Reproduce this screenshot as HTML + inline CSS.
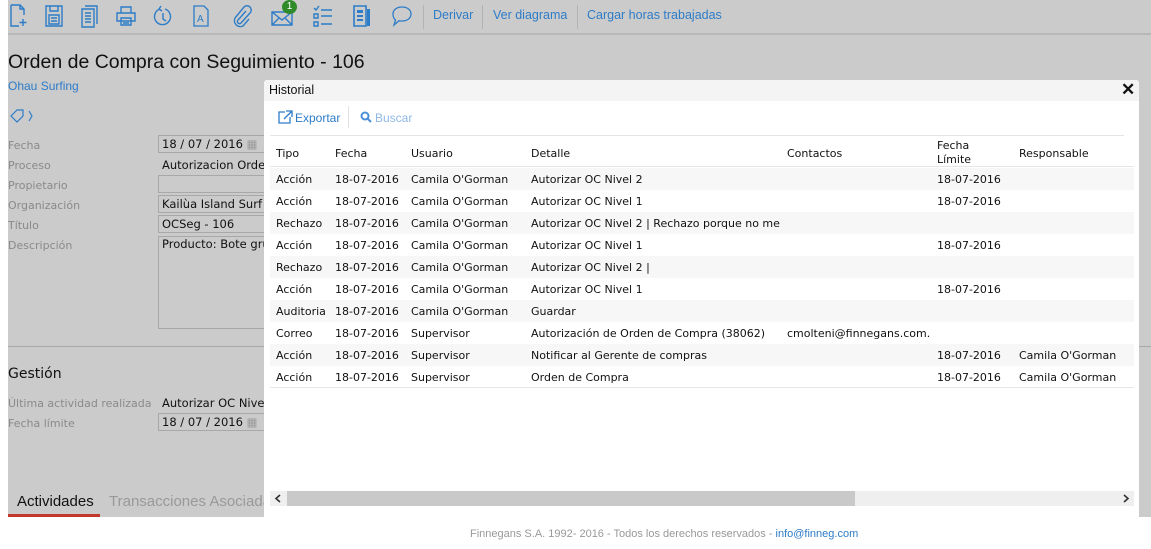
<!DOCTYPE html>
<html><head><meta charset="utf-8"><style>
*{margin:0;padding:0;box-sizing:border-box}
body{width:1151px;height:549px;background:#fff;position:relative;overflow:hidden;font-family:"Liberation Sans",sans-serif}
.a{position:absolute;white-space:nowrap}
.v{font-family:"DejaVu Sans",Verdana,sans-serif;font-size:11px;color:#111}
.lbl{font-family:"DejaVu Sans",Verdana,sans-serif;font-size:11px;color:#8a8a8a}
.inp{position:absolute;left:158px;width:110px;height:18px;border:1px solid #a8a8a8;font-family:"DejaVu Sans",sans-serif;font-size:11.5px;color:#111;padding:1px 3px;white-space:nowrap;overflow:hidden}
.tb{color:#2d7cc8;font-size:12.5px}
svg.ic{position:absolute;top:4px}
.row{position:absolute;left:270px;width:864px;height:22px}
.row span{position:absolute;top:5px}
</style></head><body>
<div class="a" style="left:8px;top:0;width:1143px;height:517px;background:#cbcbcb"></div>
<div class="a" style="left:8px;top:33px;width:1143px;height:2px;background:#b8b8b8"></div>
<svg class="ic" style="left:8px" width="22" height="24" viewBox="0 0 22 24" fill="none" stroke="#2d7cc8" stroke-width="1.4"><path d="M3 1h9l4 4v6M3 1v21h8M12 1v4h4M15 15v7M11.5 18.5h7"/></svg>
<svg class="ic" style="left:44px" width="20" height="24" viewBox="0 0 20 24" fill="none" stroke="#2d7cc8" stroke-width="1.4"><path d="M2 2h16v20H2z M6 2v5h8V2 M5 11h10v9H5z M7 14h6M7 17h6"/></svg>
<svg class="ic" style="left:80px" width="20" height="24" viewBox="0 0 20 24" fill="none" stroke="#2d7cc8" stroke-width="1.4"><path d="M5 2h12v18M2 5h12v18H2z M5 9h6M5 12h6M5 15h6M5 18h6"/></svg>
<svg class="ic" style="left:115px" width="22" height="24" viewBox="0 0 22 24" fill="none" stroke="#2d7cc8" stroke-width="1.4"><path d="M6 9V3h10v6M2 9h18v8H2z M6 14h10v7H6z M8 17h6M8 19h6"/></svg>
<svg class="ic" style="left:152px" width="22" height="24" viewBox="0 0 22 24" fill="none" stroke="#2d7cc8" stroke-width="1.4"><path d="M8 5a8 8 0 1 0 5 0M9 2l-2 3 3 2M11 9v6l3 2"/></svg>
<svg class="ic" style="left:192px" width="18" height="24" viewBox="0 0 18 24" fill="none" stroke="#2d7cc8" stroke-width="1.3"><path d="M2 2h10l4 4v16H2z"/><text x="5" y="18" font-size="10" fill="#2d7cc8" stroke="none" font-family="Liberation Sans">A</text></svg>
<svg class="ic" style="left:231px" width="22" height="24" viewBox="0 0 22 24" fill="none" stroke="#2d7cc8" stroke-width="1.4"><path d="M15 7l-8 9a2 2 0 0 0 3 3l9-10a4 4 0 0 0-6-6L4 14a6 6 0 0 0 8 8l6-7"/></svg>
<svg class="ic" style="left:270px" width="24" height="24" viewBox="0 0 24 24" fill="none" stroke="#2d7cc8" stroke-width="1.4"><path d="M2 8h20v13H2z M2 8l10 8 10-8M2 21l7-7M22 21l-7-7"/></svg>
<div class="a" style="left:282px;top:0;width:15px;height:14px;border-radius:50%;background:#2f8a2a;color:#fff;font-size:10px;text-align:center;line-height:13px">1</div>
<svg class="ic" style="left:312px" width="22" height="24" viewBox="0 0 22 24" fill="none" stroke="#2d7cc8" stroke-width="1.4"><path d="M2 4l2 2 3-4M2 10h4v4H2z M2 18h4v4H2z M9 6h11M9 12h11M9 20h11" /></svg>
<svg class="ic" style="left:352px" width="20" height="24" viewBox="0 0 20 24" fill="#2d7cc8"><path d="M2 2h12v20H2z" fill="none" stroke="#2d7cc8" stroke-width="1.6"/><rect x="15" y="5" width="3" height="17"/><rect x="5" y="6" width="6" height="3"/><rect x="5" y="11" width="6" height="2"/><rect x="5" y="15" width="6" height="2"/></svg>
<svg class="ic" style="left:390px" width="24" height="24" viewBox="0 0 24 24" fill="none" stroke="#2d7cc8" stroke-width="1.3"><path d="M12 3c5.5 0 9 3 9 7s-3.5 7-9 7c-1 0-2 0-3-.3L4 21l1.5-5C3.5 14.5 3 12 3 10c0-4 3.5-7 9-7z"/></svg>
<div class="a" style="left:423px;top:5px;width:1px;height:24px;background:#b3b3b3"></div>
<div class="a tb" style="left:433px;top:8px">Derivar</div>
<div class="a" style="left:482px;top:5px;width:1px;height:24px;background:#b3b3b3"></div>
<div class="a tb" style="left:493px;top:8px">Ver diagrama</div>
<div class="a" style="left:577px;top:5px;width:1px;height:24px;background:#b3b3b3"></div>
<div class="a tb" style="left:587px;top:8px">Cargar horas trabajadas</div>
<div class="a" style="left:8px;top:51px;font-size:19.5px;color:#111">Orden de Compra con Seguimiento - 106</div>
<div class="a" style="left:8px;top:79px;font-size:12px;color:#2d7cc8">Ohau Surfing</div>
<svg class="a" style="left:9px;top:108px" width="26" height="16" viewBox="0 0 26 16" fill="none" stroke="#2d7cc8" stroke-width="1.2"><path d="M2 8l6-6h6v6l-6 6z M11 5h.1M20 3l3 5-3 5"/></svg>
<div class="a lbl" style="left:8px;top:139px">Fecha</div>
<div class="a lbl" style="left:8px;top:159px">Proceso</div>
<div class="a lbl" style="left:8px;top:179px">Propietario</div>
<div class="a lbl" style="left:8px;top:199px">Organización</div>
<div class="a lbl" style="left:8px;top:219px">Título</div>
<div class="a lbl" style="left:8px;top:239px">Descripción</div>
<div class="inp" style="top:135px">18 / 07 / 2016 <span style="color:#999">▦</span></div>
<div class="a v" style="left:162px;top:158px;font-size:11.5px">Autorizacion Orde</div>
<div class="inp" style="top:175px"></div>
<div class="inp" style="top:195px">Kailùa Island Surf</div>
<div class="inp" style="top:215px">OCSeg - 106</div>
<div class="inp" style="top:236px;height:93px;padding-top:0">Producto: Bote gru</div>
<div class="a" style="left:8px;top:346px;width:1143px;height:1px;background:#a8a8a8"></div>
<div class="a" style="left:8px;top:366px;font-family:'DejaVu Sans',sans-serif;font-size:14px;color:#111">Gestión</div>
<div class="a lbl" style="left:8px;top:397px">Última actividad realizada</div>
<div class="a v" style="left:162px;top:396px;font-size:11.5px">Autorizar OC Nive</div>
<div class="a lbl" style="left:8px;top:417px">Fecha límite</div>
<div class="inp" style="top:413px">18 / 07 / 2016 <span style="color:#999">▦</span></div>
<div class="a" style="left:17px;top:493px;font-size:15px;color:#111">Actividades</div>
<div class="a" style="left:109px;top:493px;font-size:15px;color:#999">Transacciones Asociadas</div>
<div class="a" style="left:8px;top:514px;width:92px;height:3px;background:#c0392b"></div>
<div class="a" style="left:264px;top:80px;width:875px;height:437px;background:#fff;border-radius:3px 3px 0 0;overflow:hidden">
 <div class="a" style="left:0;top:0;width:875px;height:21px;background:#f4f4f4"></div>
 <div class="a" style="left:5px;top:3px;font-size:12.5px;color:#111">Historial</div>
 <div class="a" style="left:857px;top:0;font-size:17px;font-weight:bold;color:#111">✕</div>
 <svg class="a" style="left:14px;top:30px" width="15" height="14" viewBox="0 0 15 14" fill="none" stroke="#2d7cc8" stroke-width="1.3"><path d="M7 2H1v11h11V7M8 1h6v6M14 1L6 9"/></svg>
 <div class="a" style="left:31px;top:31px;font-size:12px;color:#2d7cc8">Exportar</div>
 <div class="a" style="left:84px;top:26px;width:1px;height:22px;background:#e2e2e2"></div>
 <svg class="a" style="left:96px;top:31px" width="12" height="12" viewBox="0 0 12 12" fill="none" stroke="#4a90d9" stroke-width="2"><circle cx="5" cy="5" r="3.5"/><path d="M7.5 7.5L11 11"/></svg>
 <div class="a" style="left:111px;top:31px;font-size:12px;color:#8fb8e6">Buscar</div>
 <div class="a" style="left:6px;top:55px;width:854px;height:1px;background:#e4e4e4"></div>
</div>
<div class="a" style="left:270px;top:166px;width:864px;height:1px;background:#e6e6e6"></div>
<div class="a v" style="left:276px;top:147px">Tipo</div>
<div class="a v" style="left:335px;top:147px">Fecha</div>
<div class="a v" style="left:411px;top:147px">Usuario</div>
<div class="a v" style="left:531px;top:147px">Detalle</div>
<div class="a v" style="left:787px;top:147px">Contactos</div>
<div class="a v" style="left:937px;top:139px;line-height:14px">Fecha<br>Límite</div>
<div class="a v" style="left:1019px;top:147px">Responsable</div>
<div class="v">
<div class="row" style="top:168px;background:#f7f7f7"><span style="left:6px">Acción</span><span style="left:65px">18-07-2016</span><span style="left:141px">Camila O'Gorman</span><span style="left:261px">Autorizar OC Nivel 2</span><span style="left:667px">18-07-2016</span></div>
<div class="row" style="top:190px"><span style="left:6px">Acción</span><span style="left:65px">18-07-2016</span><span style="left:141px">Camila O'Gorman</span><span style="left:261px">Autorizar OC Nivel 1</span><span style="left:667px">18-07-2016</span></div>
<div class="row" style="top:212px;background:#f7f7f7"><span style="left:6px">Rechazo</span><span style="left:65px">18-07-2016</span><span style="left:141px">Camila O'Gorman</span><span style="left:261px;width:249px;overflow:hidden">Autorizar OC Nivel 2 | Rechazo porque no me</span></div>
<div class="row" style="top:234px"><span style="left:6px">Acción</span><span style="left:65px">18-07-2016</span><span style="left:141px">Camila O'Gorman</span><span style="left:261px">Autorizar OC Nivel 1</span><span style="left:667px">18-07-2016</span></div>
<div class="row" style="top:256px;background:#f7f7f7"><span style="left:6px">Rechazo</span><span style="left:65px">18-07-2016</span><span style="left:141px">Camila O'Gorman</span><span style="left:261px">Autorizar OC Nivel 2 |</span></div>
<div class="row" style="top:278px"><span style="left:6px">Acción</span><span style="left:65px">18-07-2016</span><span style="left:141px">Camila O'Gorman</span><span style="left:261px">Autorizar OC Nivel 1</span><span style="left:667px">18-07-2016</span></div>
<div class="row" style="top:300px;background:#f7f7f7"><span style="left:6px">Auditoria</span><span style="left:65px">18-07-2016</span><span style="left:141px">Camila O'Gorman</span><span style="left:261px">Guardar</span></div>
<div class="row" style="top:322px"><span style="left:6px">Correo</span><span style="left:65px">18-07-2016</span><span style="left:141px">Supervisor</span><span style="left:261px">Autorización de Orden de Compra (38062)</span><span style="left:517px">cmolteni@finnegans.com.</span></div>
<div class="row" style="top:344px;background:#f7f7f7"><span style="left:6px">Acción</span><span style="left:65px">18-07-2016</span><span style="left:141px">Supervisor</span><span style="left:261px">Notificar al Gerente de compras</span><span style="left:667px">18-07-2016</span><span style="left:749px">Camila O'Gorman</span></div>
<div class="row" style="top:366px;border-bottom:1px solid #e6e6e6"><span style="left:6px">Acción</span><span style="left:65px">18-07-2016</span><span style="left:141px">Supervisor</span><span style="left:261px">Orden de Compra</span><span style="left:667px">18-07-2016</span><span style="left:749px">Camila O'Gorman</span></div>
</div>
<div class="a" style="left:270px;top:491px;width:864px;height:15px;background:#efefef"></div>
<div class="a" style="left:287px;top:491px;width:568px;height:15px;background:#c9c9c9"></div>
<svg class="a" style="left:274px;top:494px" width="8" height="9" viewBox="0 0 8 9" fill="none" stroke="#333" stroke-width="1.6"><path d="M6 1L2 4.5 6 8"/></svg>
<svg class="a" style="left:1122px;top:494px" width="8" height="9" viewBox="0 0 8 9" fill="none" stroke="#333" stroke-width="1.6"><path d="M2 1l4 3.5L2 8"/></svg>
<div class="a" style="left:470px;top:528px;font-size:11px;color:#999">Finnegans S.A. 1992- 2016 - Todos los derechos reservados - <span style="color:#2d7cc8">info@finneg.com</span></div>
</body></html>
